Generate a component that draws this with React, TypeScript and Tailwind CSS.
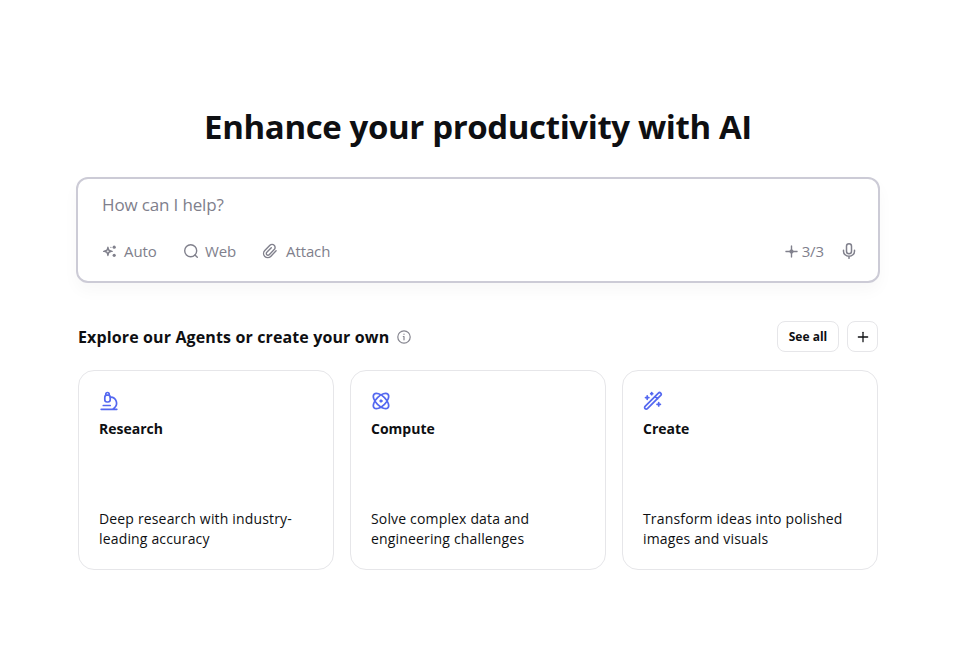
import type { ReactNode } from "react";
import { Plus } from "lucide-react";

interface Agent {
  title: string;
  lines: string[];
  icon: ReactNode;
}

const iconProps = {
  fill: "none",
  stroke: "currentColor",
  strokeLinecap: "round" as const,
  strokeLinejoin: "round" as const,
};

function MicroscopeIcon() {
  return (
    <svg className="w-5 h-5" viewBox="0 0 20 20" strokeWidth="1.7" {...iconProps}>
      <path d="M6.800 4.200V3.200a1.700 1.700 0 0 1 3.400 0v1" />
      <rect x="5.800" y="4.200" width="5.400" height="6.800" rx="2.200" />
      <path d="M4.300 14.500h6.900M2.200 18.300h15.600M11.400 6.200h.4a6 6 0 0 1 3.600 10.600l-1.800 1.500" />
    </svg>
  );
}

function AtomIcon() {
  return (
    <svg className="w-5 h-5" viewBox="0 0 20 20" strokeWidth="1.700" {...iconProps}>
      <ellipse cx="10" cy="10" rx="9.700" ry="4.900" transform="rotate(45 10 10)" />
      <ellipse cx="10" cy="10" rx="9.700" ry="4.900" transform="rotate(-45 10 10)" />
      <circle cx="10" cy="10" r="1.300" fill="currentColor" strokeWidth="0.6" />
    </svg>
  );
}

function WandIcon() {
  return (
    <svg className="w-5 h-5" viewBox="0 0 20 20" strokeWidth="1.700" {...iconProps}>
      <path d="M2.100 15.400 15.400 2.100a1.550 1.550 0 0 1 2.300 2.300L4.400 17.700a1.600 1.600 0 0 1-2.300-2.300ZM12.100 5.500l2.400 2.400" />
      <path d="M4.200 4.900v3.400M2.500 6.600h3.400M15.700 11.600V15M14 13.300h3.400M8.700 1.700v2M7.700 2.700h2" />
    </svg>
  );
}

function SparklesIcon() {
  return (
    <svg className="w-4 h-4" viewBox="0 0 16 16" strokeWidth="1.500" {...iconProps}>
      <path d="M5.900 5 6.900 7.300 9.200 8.300 6.900 9.300 5.900 11.600 4.900 9.300 2.600 8.300 4.900 7.300Z" />
      <path d="M5.900 4v1M5.900 11.600v1M1.500 8.300h1M9.300 8.300h1" strokeWidth="1.200" />
      <g fill="currentColor" stroke="none">
        <circle cx="12.200" cy="4.200" r="1.600" />
        <circle cx="12.200" cy="12.300" r="1.600" />
        <circle cx="8.900" cy="4.300" r=".6" />
      </g>
    </svg>
  );
}

function SearchIcon() {
  return (
    <svg className="w-4 h-4" viewBox="0 0 16 16" strokeWidth="1.400" {...iconProps}>
      <circle cx="7.700" cy="7.700" r="6" />
      <path d="m12 12 2.300 2.300" />
    </svg>
  );
}

function PaperclipIcon() {
  return (
    <svg className="w-4 h-4" viewBox="0 0 16 16" strokeWidth="1.400" {...iconProps}>
      <path d="m14.100 7.800-5.400 5.600a4.100 4.100 0 0 1-5.900 0 4.200 4.200 0 0 1 0-5.900l5.100-5.200a3 3 0 0 1 4.300 0 3 3 0 0 1 0 4.300l-5 5.100a1.650 1.650 0 0 1-2.400 0 1.650 1.650 0 0 1 0-2.400l4.500-4.600" />
    </svg>
  );
}

function CreditIcon() {
  return (
    <svg className="w-[13px] h-[13px]" viewBox="0 0 13 13" fill="currentColor">
      <path d="M5.800.7q.7-.8 1.400 0V4q.3 1.500 1.800 1.800h3.300q.8.7 0 1.400H9Q7.500 7.500 7.200 9v3.300q-.7.8-1.400 0V9Q5.500 7.500 4 7.200H.7q-.8-.7 0-1.400H4Q5.500 5.500 5.800 4Z" />
      <circle cx="6.500" cy="6.500" r="1.700" />
    </svg>
  );
}

function MicIcon() {
  return (
    <svg className="w-4 h-4" viewBox="0 0 16 16" strokeWidth="1.500" {...iconProps}>
      <rect x="5.500" y=".8" width="5" height="10" rx="2.500" />
      <path d="M2.500 7.300v.9a5.500 5.100 0 0 0 11 0v-.9M8 13.400v1.900" />
    </svg>
  );
}

function InfoIcon() {
  return (
    <svg className="w-[14px] h-[14px]" viewBox="0 0 14 14" strokeWidth="1.200" {...iconProps}>
      <circle cx="7" cy="7" r="6.200" />
      <path d="M6.300 6.500H7v3.300M7 4.100v.2" />
    </svg>
  );
}

const agents: Agent[] = [
  {
    title: "Research",
    lines: ["Deep research with industry-", "leading accuracy"],
    icon: <MicroscopeIcon />,
  },
  {
    title: "Compute",
    lines: ["Solve complex data and", "engineering challenges"],
    icon: <AtomIcon />,
  },
  {
    title: "Create",
    lines: ["Transform ideas into polished", "images and visuals"],
    icon: <WandIcon />,
  },
];

function AgentCard({ agent }: { agent: Agent }) {
  return (
    <button className="flex flex-col h-[200px] p-5 rounded-2xl border border-[#e6e6e9] bg-white text-left">
      <span className="text-[#5468f0]">{agent.icon}</span>
      <span className="mt-2 text-[14px] leading-5 font-bold whitespace-nowrap">{agent.title}</span>
      <span className="mt-auto text-[14px] leading-5 tracking-[0.16px] whitespace-nowrap">
        {agent.lines.map((line) => (
          <span key={line} className="block">
            {line}
          </span>
        ))}
      </span>
    </button>
  );
}

export default function App() {
  return (
    <main className="flex flex-col items-center w-[956px] h-[649px] pt-[102px] bg-white text-[#0e0f12] font-['Open_Sans',sans-serif]">
      <h1 className="text-[33px] leading-[50px] font-bold tracking-[-0.38px] whitespace-nowrap">
        Enhance your productivity with AI
      </h1>

      {/* Prompt box */}
      <section className="flex flex-col justify-between w-[804px] h-[106px] mt-[25px] pl-6 pr-[21px] pt-[13px] pb-[17px] rounded-xl border-2 border-[#cccbd6] bg-white shadow-[0_8px_16px_rgba(0,0,0,0.03)] text-[#80808c]">
        <div className="text-[17px] leading-[26px] tracking-[-0.15px]">How can I help?</div>
        <div className="flex items-center justify-between text-[15px] leading-[22px] tracking-[-0.1px] pb-0.5">
          <div className="flex items-center">
            <button className="flex items-center gap-[6px] w-[81px]">
              <SparklesIcon />
              Auto
            </button>
            <button className="flex items-center gap-[6px] w-[79px]">
              <SearchIcon />
              Web
            </button>
            <button className="flex items-center gap-2">
              <PaperclipIcon />
              Attach
            </button>
          </div>
          <div className="flex items-center">
            <span className="flex items-center gap-1 mr-[17px]">
              <CreditIcon />
              3/3
            </span>
            <button>
              <MicIcon />
            </button>
          </div>
        </div>
      </section>

      {/* Agents */}
      <section className="w-[800px] mt-[38px]">
        <div className="flex items-center justify-between h-[31px]">
          <div className="flex items-center gap-2">
            <h2 className="text-[16px] leading-6 font-bold tracking-[0.13px] whitespace-nowrap">
              Explore our Agents or create your own
            </h2>
            <span className="text-[#85858f]">
              <InfoIcon />
            </span>
          </div>
          <div className="flex gap-2">
            <button className="flex items-center justify-center w-[62px] h-[31px] rounded-lg border border-[#e6e6e9] text-[12px] font-bold whitespace-nowrap">
              See all
            </button>
            <button className="flex items-center justify-center w-[31px] h-[31px] rounded-lg border border-[#e6e6e9]">
              <Plus className="w-4 h-4" strokeWidth={1.9} />
            </button>
          </div>
        </div>
        <div className="grid grid-cols-3 gap-4 mt-[18px]">
          {agents.map((agent) => (
            <AgentCard key={agent.title} agent={agent} />
          ))}
        </div>
      </section>
    </main>
  );
}
